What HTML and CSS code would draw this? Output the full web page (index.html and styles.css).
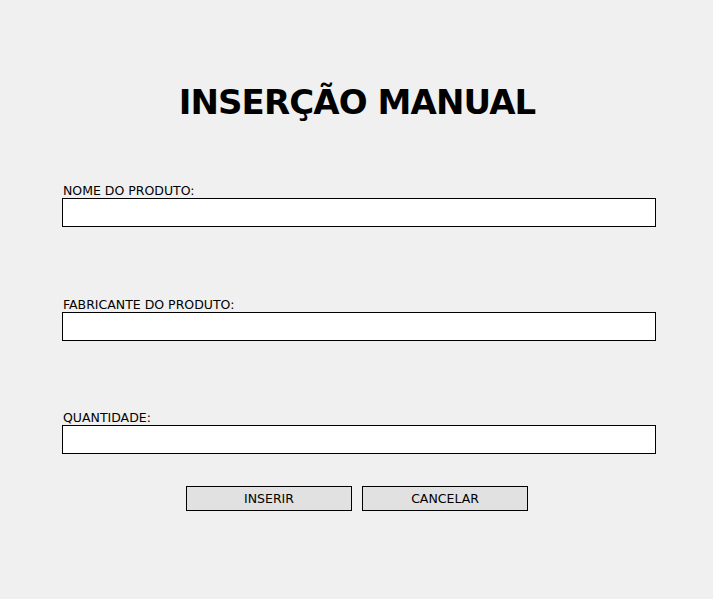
FILE: index.html
```html
<!DOCTYPE html>
<html lang="pt">
<head>
<meta charset="utf-8">
<title>Inserção Manual</title>
<link rel="stylesheet" href="styles.css">
</head>
<body>
<main class="page">
  <h1 class="title">INSERÇÃO MANUAL</h1>
  <form class="form">
    <div class="field">
      <label class="label" for="nome">NOME DO PRODUTO:</label>
      <input class="input" id="nome" type="text">
    </div>
    <div class="field">
      <label class="label" for="fab">FABRICANTE DO PRODUTO:</label>
      <input class="input" id="fab" type="text">
    </div>
    <div class="field">
      <label class="label" for="qtd">QUANTIDADE:</label>
      <input class="input" id="qtd" type="text">
    </div>
    <div class="actions">
      <button class="btn" type="button">INSERIR</button>
      <button class="btn" type="button">CANCELAR</button>
    </div>
  </form>
</main>
</body>
</html>
```
FILE: styles.css
```css
html, body {
  margin: 0;
  padding: 0;
  background: #f0f0f0;
}
body {
  font-family: "DejaVu Sans", Verdana, sans-serif;
  color: #000;
}
.page {
  width: 713px;
  height: 599px;
  display: flex;
  flex-direction: column;
}
.title {
  margin: 80px 0 0 0;
  text-align: center;
  padding-left: 1px;
  font-family: "DejaVu Sans", Verdana, sans-serif;
  font-size: 34px;
  line-height: 44px;
  font-weight: bold;
  letter-spacing: -0.9px;
}
.form {
  width: 594px;
  margin: 60px 0 0 62px;
  display: flex;
  flex-direction: column;
}
.field {
  display: flex;
  flex-direction: column;
  margin-bottom: 71px;
}
.field:nth-child(2) {
  margin-bottom: 70px;
}
.field:nth-child(3) {
  margin-bottom: 32px;
}
.label {
  font-size: 12.5px;
  line-height: 14px;
  padding-left: 1px;
}
.input {
  box-sizing: border-box;
  width: 594px;
  height: 29px;
  margin: 0;
  border: 1px solid #000;
  background: #fff;
  outline: none;
}
.actions {
  display: flex;
  gap: 10px;
  padding-left: 124px;
}
.btn {
  box-sizing: border-box;
  width: 166px;
  height: 25px;
  border: 1px solid #000;
  background: #e1e1e1;
  font-family: "DejaVu Sans", Verdana, sans-serif;
  font-size: 12.5px;
  color: #000;
  padding: 0;
}
```
